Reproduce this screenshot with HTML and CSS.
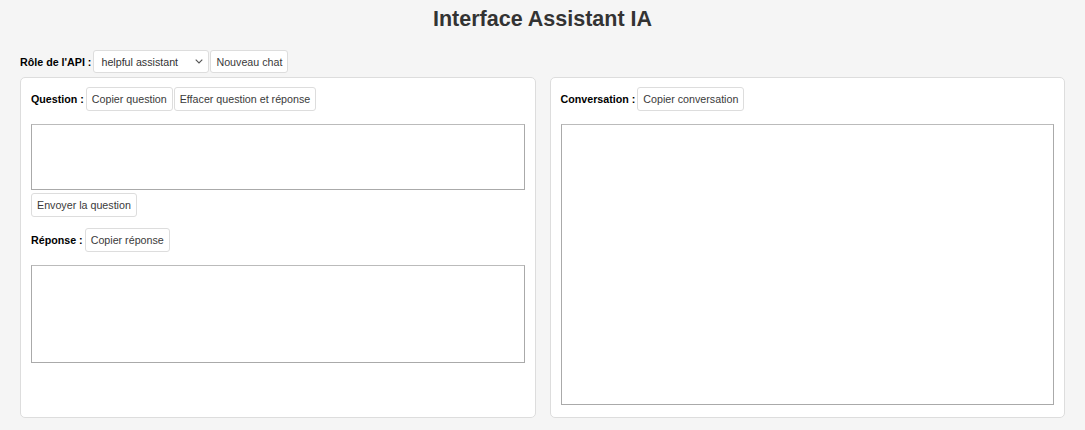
FILE: index.html
```html
<!DOCTYPE html>
<html lang="fr">
<head>
<meta charset="utf-8">
<title>Interface Assistant IA</title>
<link rel="stylesheet" href="styles.css">
</head>
<body>
<h1 class="title">Interface Assistant IA</h1>
<div class="role-row">
  <label class="label" for="role">Rôle de l'API :</label>
  <span class="select-wrap">
    <select id="role" class="select">
      <option>helpful assistant</option>
    </select>
    <svg class="chev" width="8" height="5" viewBox="0 0 8 5"><path d="M0.7 0.7 L4 4 L7.3 0.7" fill="none" stroke="#555" stroke-width="1.1"/></svg>
  </span>
  <button class="btn">Nouveau chat</button>
</div>
<div class="panels">
  <section class="panel">
    <div class="row">
      <span class="label">Question :</span>
      <button class="btn">Copier question</button>
      <button class="btn">Effacer question et réponse</button>
    </div>
    <textarea class="area area-question"></textarea>
    <div class="send-row">
      <button class="btn">Envoyer la question</button>
    </div>
    <div class="row row-answer">
      <span class="label">Réponse :</span>
      <button class="btn">Copier réponse</button>
    </div>
    <textarea class="area area-answer"></textarea>
  </section>
  <section class="panel">
    <div class="row">
      <span class="label">Conversation :</span>
      <button class="btn">Copier conversation</button>
    </div>
    <textarea class="area area-conv"></textarea>
  </section>
</div>
</body>
</html>
```
FILE: styles.css
```css
* { box-sizing: border-box; }
html, body { margin: 0; }
body {
  background: #f5f5f5;
  font-family: "Liberation Sans", Arial, sans-serif;
  color: #333;
  padding: 0 20px;
  font-size: 10.7px;
}
.title {
  margin: 7px 0 18px;
  font-size: 21.5px;
  line-height: 25px;
  text-align: center;
  font-weight: bold;
  color: #333;
}
.role-row {
  display: flex;
  align-items: center;
  gap: 1px;
  height: 23px;
}
.label {
  font-weight: bold;
  color: #000;
  font-size: 10.7px;
  margin-right: 1px;
}
.select-wrap {
  position: relative;
  display: inline-flex;
}
.select {
  appearance: none;
  -webkit-appearance: none;
  width: 116px;
  height: 23px;
  font-family: "Liberation Sans", Arial, sans-serif;
  font-size: 10.7px;
  color: #333;
  background: #fff;
  border: 1px solid #ddd;
  border-radius: 3px;
  padding: 0 4px 0 7px;
}
.chev {
  position: absolute;
  right: 6px;
  top: 9px;
  pointer-events: none;
}
.btn {
  height: 24px;
  padding: 0 5px;
  font-family: "Liberation Sans", Arial, sans-serif;
  font-size: 10.7px;
  color: #3a3a3a;
  background: #fff;
  border: 1px solid #ddd;
  border-radius: 3px;
}
.role-row .btn { height: 23px; }
.panels {
  display: flex;
  gap: 14px;
  margin-top: 4px;
}
.panel {
  flex: 1;
  background: #fff;
  border: 1px solid #ddd;
  border-radius: 5px;
  padding: 9px 10px 12px;
  display: flex;
  flex-direction: column;
}
.row {
  display: flex;
  align-items: center;
  gap: 1px;
}
.area {
  display: block;
  width: 100%;
  margin-top: 13px;
  border: 1px solid #aaa;
  border-top-color: #bbb;
  background: #fff;
  resize: none;
  font-family: "Liberation Sans", Arial, sans-serif;
}
.area-question { height: 66px; }
.send-row { display: flex; margin-top: 3px; }
.row-answer { margin-top: 11px; }
.area-answer { height: 98px; }
.area-conv { height: 281px; }
```
